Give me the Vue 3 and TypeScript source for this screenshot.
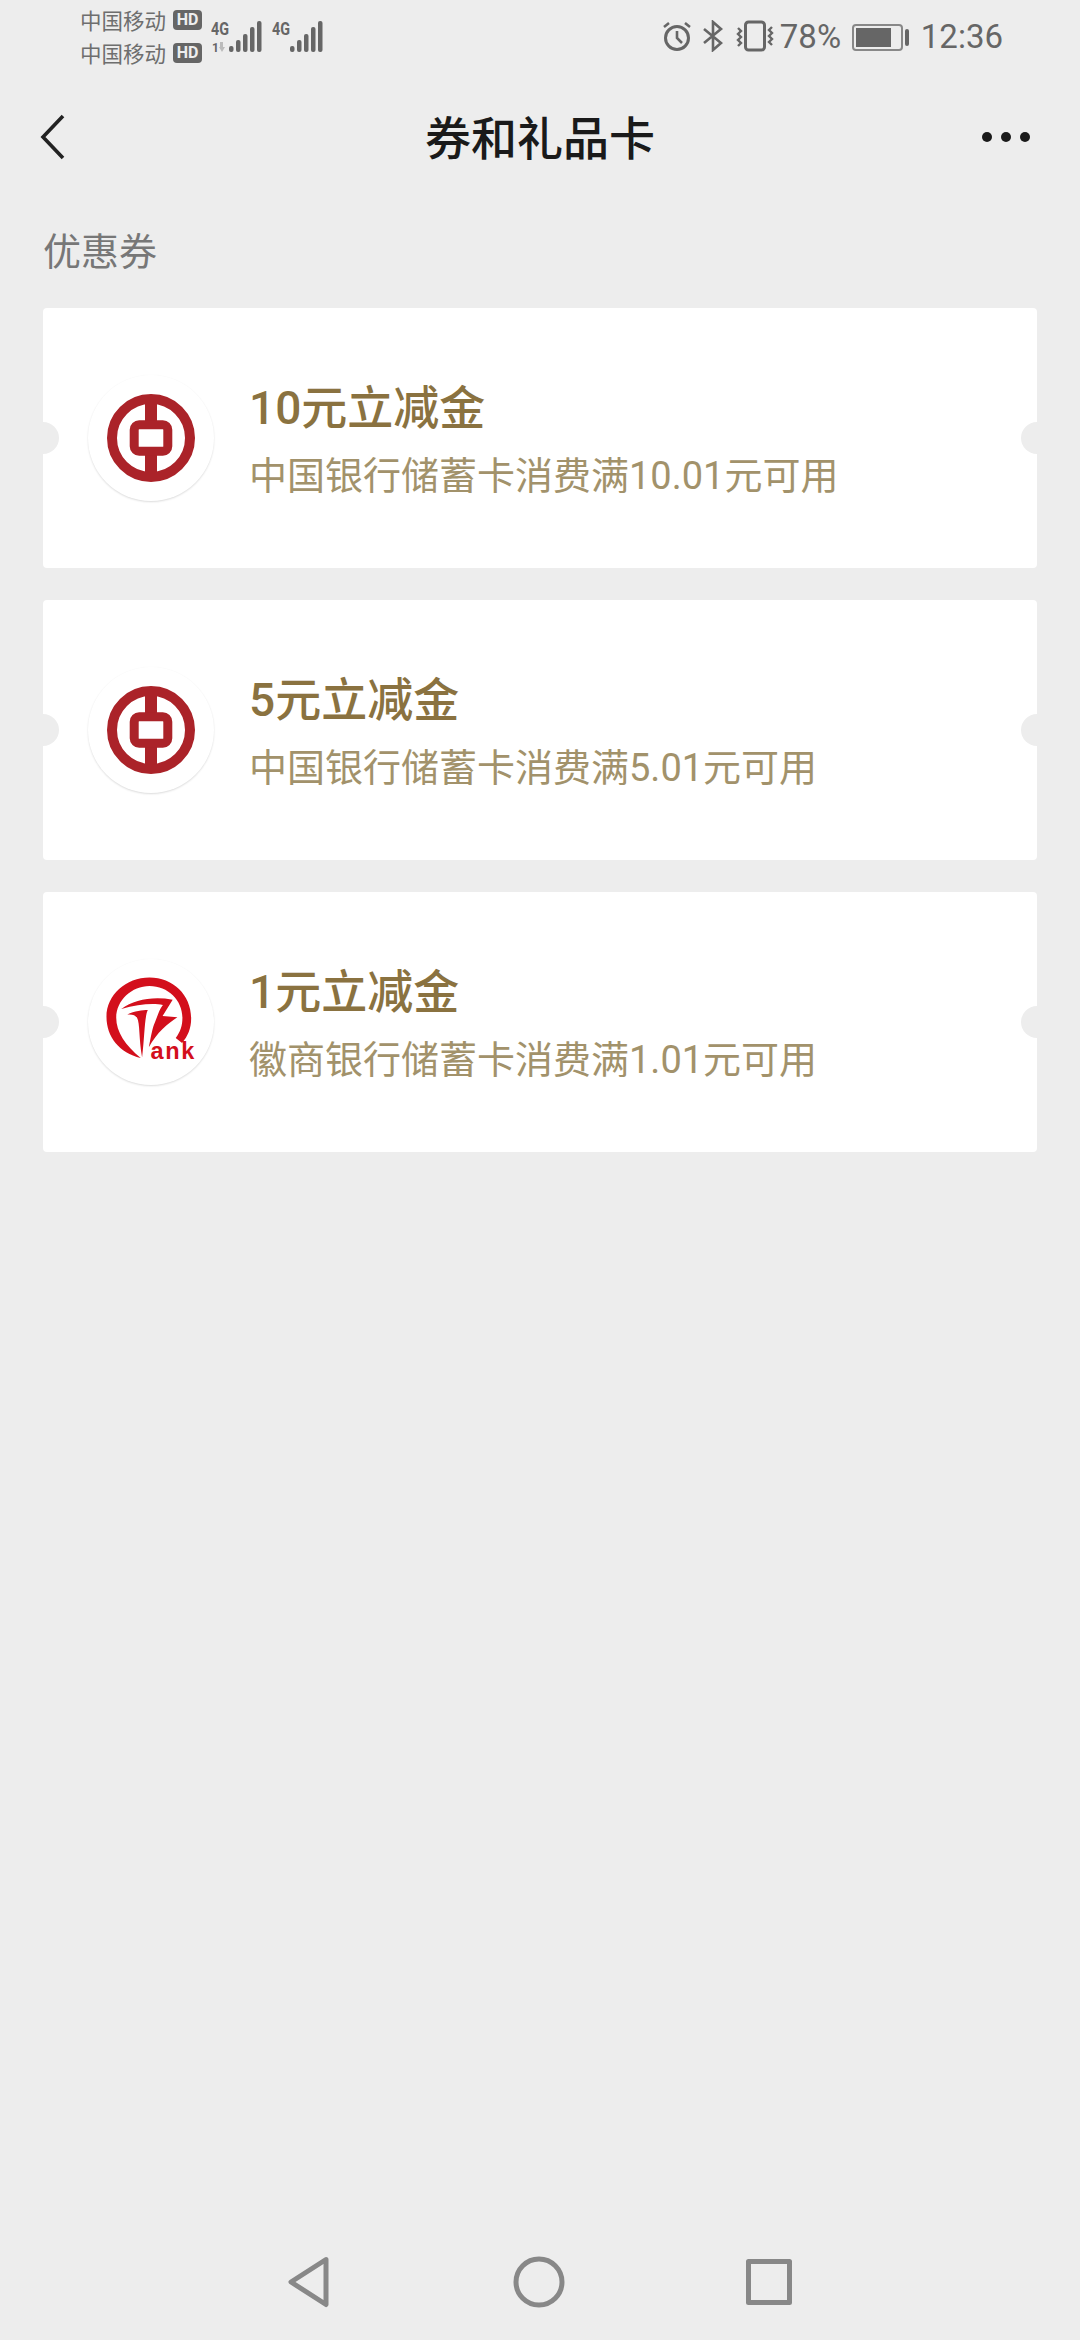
<script setup lang="ts">
interface Coupon { title: string; desc: string; logo: 'boc' | 'hs' }
const coupons: Coupon[] = [
  { title: '10元立减金', desc: '中国银行储蓄卡消费满10.01元可用', logo: 'boc' },
  { title: '5元立减金', desc: '中国银行储蓄卡消费满5.01元可用', logo: 'boc' },
  { title: '1元立减金', desc: '徽商银行储蓄卡消费满1.01元可用', logo: 'hs' },
]
const carriers = ['中国移动', '中国移动']
</script>

<template>
  <div class="page">
    <div class="status">
      <div class="carriers">
        <div v-for="(c, i) in carriers" :key="i" class="carrier">
          <span>{{ c }}</span><b class="hd">HD</b>
        </div>
      </div>
      <svg class="signal" width="116" height="46" viewBox="0 -10 116 46">
        <g fill="#666" font-family="Roboto, sans-serif" font-weight="700">
          <text x="0" y="15" font-size="18" textLength="18" lengthAdjust="spacingAndGlyphs">4G</text>
          <text x="1" y="32" font-size="12">1</text>
          <path d="M9 22h3v5h2l-3 5-3-5h1z" fill="#bbb" />
          <rect x="18" y="26" width="4.5" height="6" rx="2" />
          <rect x="25" y="20" width="4.5" height="12" rx="2" />
          <rect x="32" y="14" width="4.5" height="18" rx="2" />
          <rect x="39" y="7" width="4.5" height="25" rx="2" />
          <rect x="46" y="1" width="4.5" height="31" rx="2" />
          <text x="61" y="15" font-size="18" textLength="18" lengthAdjust="spacingAndGlyphs">4G</text>
          <rect x="79" y="26" width="4.5" height="6" rx="2" />
          <rect x="86" y="20" width="4.5" height="12" rx="2" />
          <rect x="93" y="14" width="4.5" height="18" rx="2" />
          <rect x="100" y="7" width="4.5" height="25" rx="2" />
          <rect x="107" y="1" width="4.5" height="31" rx="2" />
        </g>
      </svg>
      <div class="status-right">
        <svg width="30" height="32" viewBox="0 0 30 32" fill="none" stroke="#666" stroke-width="3">
          <circle cx="15" cy="18" r="11.5" />
          <path d="M15 11v7l5 5" stroke-width="2.6" />
          <path d="M2 7l5-4M28 7l-5-4" stroke-width="2.6" />
        </svg>
        <svg class="bt" width="21" height="32" viewBox="0 0 21 32" fill="none" stroke="#666" stroke-width="2.6">
          <path d="M1 9l17 14-8 7V2l8 7L1 23" />
        </svg>
        <svg class="vib" width="40" height="32" viewBox="0 0 40 32" fill="none" stroke="#666">
          <rect x="10.5" y="2" width="19" height="28" rx="3" stroke-width="3" />
          <path d="M3 8l3 3-3 3 3 3-3 3 3 3-3 3M37 7l-3 3 3 3-3 3 3 3-3 3 3 3" stroke-width="2.4" />
        </svg>
        <span class="pct">78%</span>
        <span class="battery"><i class="level"></i></span><i class="nub"></i>
        <span class="time">12:36</span>
      </div>
    </div>

    <header class="nav">
      <svg class="back" width="26" height="46" viewBox="0 0 26 46" fill="none" stroke="#222" stroke-width="3.6">
        <path d="M23 2L3 23l20 21" />
      </svg>
      <h1>券和礼品卡</h1>
      <div class="more"><i></i><i></i><i></i></div>
    </header>

    <div class="section">优惠券</div>

    <main class="list">
      <article v-for="c in coupons" :key="c.title" class="card">
        <div class="avatar">
          <svg v-if="c.logo === 'boc'" width="88" height="88" viewBox="0 0 88 88">
            <circle cx="44" cy="44" r="39" fill="none" stroke="#ab2329" stroke-width="10" />
            <rect x="38" y="6" width="12" height="76" fill="#ab2329" />
            <rect x="27.2" y="30.7" width="33.6" height="26.6" rx="5" fill="#fff" stroke="#ab2329" stroke-width="9" />
          </svg>
          <svg v-else width="126" height="126" viewBox="57 33 375 375">
            <g fill="#d30f1c">
              <path d="M214 328C150 312 112 265 112 205C112 140 170 88 240 88C310 88 364 140 364 210C364 240 354 262 337 283L318 268C332 250 338 232 338 208C338 155 295 113 240 113C188 113 141 155 141 208C141 250 168 290 214 328Z" />
              <path d="M156 182C195 153 250 144 309 154L279 203L323 206C295 225 262 250 238 296C245 262 248 240 256 222L266 196C270 186 274 178 280 170C250 164 205 168 156 182Z" />
              <path d="M174 198C195 188 220 185 235 185C225 205 226 260 218 326C208 270 212 225 203 208C198 200 190 197 174 198Z" />
              <text x="243" y="330" font-family="Liberation Sans, sans-serif" font-weight="700" font-size="70" letter-spacing="5">ank</text>
            </g>
          </svg>
        </div>
        <div class="info">
          <div class="title">{{ c.title }}</div>
          <div class="desc">{{ c.desc }}</div>
        </div>
      </article>
    </main>

    <footer class="softkeys">
      <svg width="44" height="54" viewBox="0 0 44 54" fill="none" stroke="#888" stroke-width="5" stroke-linejoin="round">
        <path d="M39 4.5L4 27l35 22.5z" />
      </svg>
      <svg width="52" height="54" viewBox="0 0 52 54" fill="none" stroke="#888" stroke-width="5">
        <circle cx="26" cy="27" r="23" />
      </svg>
      <svg width="46" height="54" viewBox="0 0 46 54" fill="none" stroke="#888" stroke-width="5" stroke-linejoin="round">
        <rect x="2.5" y="6.5" width="41" height="41" />
      </svg>
    </footer>
  </div>
</template>

<style>
body { background: #ededed; }
</style>

<style scoped>
.page {
  width: 1080px;
  height: 2340px;
  background: #ededed;
  display: flex;
  flex-direction: column;
  font-family: "Noto Sans CJK SC", "Noto Sans", sans-serif;
  overflow: hidden;
}
.status {
  height: 72px;
  display: flex;
  align-items: flex-start;
  padding-left: 80px;
  color: #666;
  box-sizing: border-box;
}
.carriers { display: flex; flex-direction: column; gap: 11px; padding-top: 9px; }
.carrier { display: flex; align-items: center; gap: 7px; height: 22px; font-size: 21.5px; line-height: 22px; color: #6e6e6e; }
.hd {
  width: 29px; height: 20px; border-radius: 4px; background: #666; color: #eee;
  font: 700 16px/20px "Roboto", sans-serif; text-align: center;
}
.signal { margin: 10px 0 0 9px; }
.status-right { margin-left: auto; margin-right: 77px; margin-top: 20px; display: flex; align-items: flex-start; }
.bt { margin-left: 11px; }
.vib { margin-left: 11px; }
.pct, .time { font: 400 33px/34px Roboto, sans-serif; color: #666; }
.pct { margin-left: 5px; width: 66px; margin-right: 6px; }
.battery {
  width: 51px; height: 27px; margin-top: 4px; box-sizing: border-box;
  border: 2px solid #888; border-radius: 4px; padding: 2px; display: block;
}
.level { display: block; width: 35px; height: 19px; background: #666; }
.nub { display: block; width: 4px; height: 17px; margin: 9px 0 0 2px; background: #666; border-radius: 2px; }
.time { margin-left: 12px; }
.nav {
  height: 130px;
  position: relative;
  display: flex;
  align-items: center;
  justify-content: space-between;
  padding: 0 50px 0 40px;
}
.nav h1 {
  position: absolute; left: 0; right: 0; top: 0; margin: 0;
  text-align: center;
  font-size: 46px; line-height: 127px; font-weight: 500; color: #1a1a1a;
}
.more { display: flex; gap: 9px; }
.more i { width: 10px; height: 10px; border-radius: 50%; background: #1a1a1a; display: block; }
.section {
  margin-top: 22px;
  padding-left: 43px;
  font-size: 38px;
  line-height: 50px;
  color: #777;
}
.list {
  margin: 34px 43px 0;
  display: flex;
  flex-direction: column;
  gap: 32px;
}
.card {
  position: relative;
  height: 260px;
  background: #fff;
  border-radius: 4px;
  display: flex;
  align-items: center;
  padding-left: 45px;
  gap: 35px;
  overflow: hidden;
}
.card::before, .card::after {
  content: "";
  position: absolute;
  top: 50%;
  width: 32px;
  height: 32px;
  margin-top: -16px;
  border-radius: 50%;
  background: #ededed;
}
.card::before { left: -16px; }
.card::after { right: -16px; }
.avatar {
  width: 126px;
  height: 126px;
  border-radius: 50%;
  background: #fff;
  box-shadow: 0 1px 2px rgba(0, 0, 0, 0.14);
  display: flex;
  align-items: center;
  justify-content: center;
  flex: none;
}
.info { display: flex; flex-direction: column; padding-top: 3px; font-family: Roboto, "Noto Sans CJK SC", sans-serif; }
.title { font-size: 46px; line-height: 60px; font-weight: 500; color: #8a7240; }
.desc { font-size: 38px; line-height: 50px; margin-top: 13px; color: #a2926b; }
.softkeys {
  margin-top: auto;
  height: 108px;
  box-sizing: border-box;
  padding: 23px 288px 0 287px;
  display: flex;
  justify-content: space-between;
  align-items: flex-start;
}
</style>
